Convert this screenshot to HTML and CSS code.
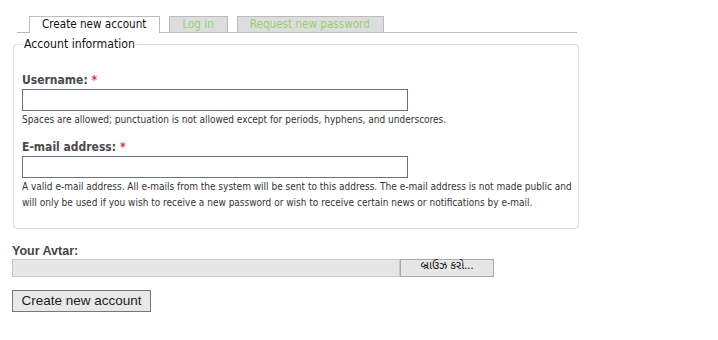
FILE: index.html
```html
<!DOCTYPE html>
<html>
<head>
<meta charset="utf-8">
<link rel="stylesheet" href="styles.css">
</head>
<body>
<div class="page">
  <ul class="tabs">
    <li class="tab active">Create new account</li>
    <li class="tab">Log in</li>
    <li class="tab">Request new password</li>
  </ul>
  <fieldset class="box">
    <legend class="legend">Account information</legend>
    <div class="item">
      <label class="label">Username: <span class="req">*</span></label>
      <div class="input"></div>
      <div class="desc">Spaces are allowed; punctuation is not allowed except for periods, hyphens, and underscores.</div>
    </div>
    <div class="item">
      <label class="label">E-mail address: <span class="req">*</span></label>
      <div class="input"></div>
      <div class="desc">A valid e-mail address. All e-mails from the system will be sent to this address. The e-mail address is not made public and will only be used if you wish to receive a new password or wish to receive certain news or notifications by e-mail.</div>
    </div>
  </fieldset>
  <div class="avatar">
    <div class="avlabel">Your Avtar:</div>
    <div class="file">
      <div class="filefield"></div>
      <div class="filebtn">બ્રાઉઝ કરો...</div>
    </div>
  </div>
  <div class="submit">Create new account</div>
</div>
</body>
</html>
```
FILE: styles.css
```css
html, body { margin: 0; padding: 0; background: #fff; }
body { font-family: "DejaVu Sans Condensed", "DejaVu Sans", sans-serif; color: #222; }
.page { padding: 16px 0 0 12px; }
.tabs {
  list-style: none; margin: 0 0 0 5px; padding: 0 0 0 12px;
  width: 548px; height: 16px;
  border-bottom: 1px solid #bbb;
  display: flex; gap: 9px; align-items: flex-end;
}
.tab {
  height: 15px; line-height: 15px;
  padding: 0 13px 0 12px;
  font-size: 11.6px;
  background: #ddd; color: #98d070;
  border: 1px solid #bbb; border-bottom: none;
}
.tab.active {
  background: #fff; color: #111;
  height: 16px; margin-bottom: -1px;
}
.box {
  margin: 4px 0 0 1px; width: 552px;
  border: 1px solid #d6dde3; border-radius: 4px;
  padding: 0 4px 17px 8px;
}
.legend { font-size: 12.2px; padding: 0 1px; color: #111; margin-left: 1px; line-height: 14px; }
.item { margin-top: 21px; }
.item + .item { margin-top: 11px; }
.label { display: block; font-weight: bold; font-size: 12px; color: #4a4a4a; line-height: 16px; }
.req { color: #e03040; }
.input { margin-top: 1px; width: 384px; height: 20px; border: 1px solid #66707f; }
.desc { font-size: 10px; line-height: 16px; color: #333; margin-top: 1px; }
.avatar { margin-top: 15px; }
.avlabel { font-family: "Liberation Sans", Arial, sans-serif; font-weight: bold; font-size: 12.5px; color: #444; line-height: 14px; }
.file { display: flex; margin-top: 1px; height: 18px; }
.filefield { width: 386px; height: 16px; background: #e6e6e6; border: 1px solid #c8c8c8; }
.filebtn {
  width: 92px; height: 16px; background: #e6e6e6; border: 1px solid #a9a9a9;
  font-family: "Noto Sans Gujarati", "Noto Sans", "Liberation Sans", sans-serif; font-size: 11.5px;
  text-align: center; line-height: 14px; color: #111;
}
.submit {
  margin-top: 13px; display: inline-block;
  width: 137px; height: 20px; line-height: 20px;
  background: #e8e8e8; border: 1px solid #777;
  font-family: "Liberation Sans", Arial, sans-serif; font-size: 13.5px; color: #222;
  text-align: center;
}
```
